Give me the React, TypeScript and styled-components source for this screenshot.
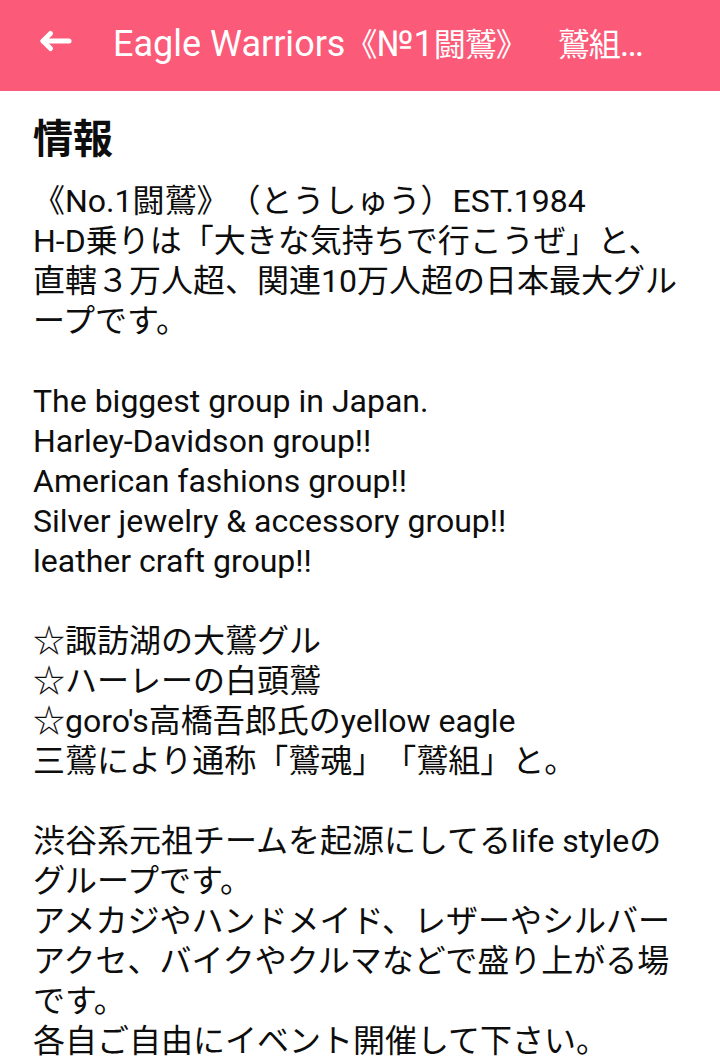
import React from 'react'
import styled, { createGlobalStyle } from 'styled-components'

const GlobalStyle = createGlobalStyle`
  html, body {
    margin: 0;
    padding: 0;
    background: #ffffff;
  }
  body {
    font-family: Roboto, "Noto Sans CJK JP", sans-serif;
    color: #0d0d0d;
    text-spacing-trim: space-all;
  }
`

const Page = styled.div`
  width: 720px;
  min-height: 1064px;
  background: #ffffff;
`

const TopBar = styled.header`
  height: 91px;
  background: #fb5a78;
  display: flex;
  align-items: center;
  padding: 0 66px 7px 32px;
  box-sizing: border-box;
`

const BackButton = styled.button`
  width: 48px;
  height: 48px;
  padding: 0;
  border: none;
  background: none;
  display: flex;
  align-items: center;
  justify-content: center;
  flex-shrink: 0;
  cursor: pointer;
`

const BarTitle = styled.h1`
  margin: 0 0 0 33px;
  font-size: 36px;
  font-weight: 400;
  color: #ffffff;
  white-space: nowrap;
  overflow: hidden;
  text-overflow: ellipsis;
  min-width: 0;
`

/* the bar's CJK glyphs are narrower than the Latin ones in the reference */
const Narrow = styled.span`
  font-size: 32px;
  letter-spacing: -1px;
`

const Content = styled.main`
  padding: 21px 33px 0 33px;
`

const SectionTitle = styled.h2`
  margin: 0 0 13px 0;
  font-size: 40px;
  line-height: 56px;
  font-weight: 700;
  color: #0d0d0d;
`

const Description = styled.p`
  margin: 0;
  font-size: 32px;
  line-height: 40px;
  white-space: pre-wrap;
  line-break: anywhere;
  color: #0d0d0d;
`

const ArrowBack = () => (
  <svg width="48" height="48" viewBox="0 0 48 48" fill="none" stroke="#ffffff" strokeWidth="5" strokeLinecap="round" strokeLinejoin="round">
    <path d="M37 23H11" />
    <path d="M18.5 15.5L11 23l7.5 7.5" />
  </svg>
)

const info = `《No.1闘鷲》（とうしゅう）EST.1984
H-D乗りは「大きな気持ちで行こうぜ」と、
直轄３万人超、関連10万人超の日本最大グループです。

The biggest group in Japan.
Harley-Davidson group!!
American fashions group!!
Silver jewelry & accessory group!!
leather craft group!!

☆諏訪湖の大鷲グル
☆ハーレーの白頭鷲
☆goro's高橋吾郎氏のyellow eagle
三鷲により通称「鷲魂」「鷲組」と。

渋谷系元祖チームを起源にしてるlife styleのグループです。
アメカジやハンドメイド、レザーやシルバーアクセ、バイクやクルマなどで盛り上がる場です。
各自ご自由にイベント開催して下さい。`

export default function App() {
  return (
    <Page>
      <GlobalStyle />
      <TopBar>
        <BackButton aria-label="戻る">
          <ArrowBack />
        </BackButton>
        <BarTitle>
          Eagle Warriors<Narrow>《</Narrow>№1<Narrow>闘鷲》　鷲組　イーグルウォリアーズ</Narrow>
        </BarTitle>
      </TopBar>
      <Content>
        <SectionTitle>情報</SectionTitle>
        <Description>{info}</Description>
      </Content>
    </Page>
  )
}
